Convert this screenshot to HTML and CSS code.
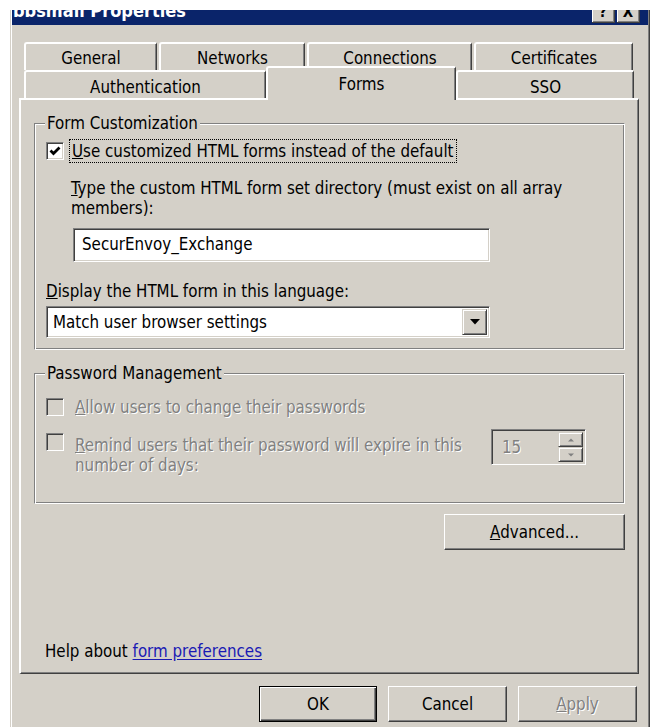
FILE: index.html
```html
<!DOCTYPE html>
<html lang="en">
<head>
<meta charset="utf-8">
<title>bbsmail Properties</title>
<link rel="stylesheet" href="styles.css">
</head>
<body>
<div class="screen">
  <div class="dialog">
    <div class="titlebar">
      <span class="title">bbsmail Properties</span>
      <div class="caption-btns">
        <span class="cbtn">?</span>
        <span class="cbtn">X</span>
      </div>
    </div>
    <div class="client">
      <div class="tabs">
        <div class="tab-row back">
          <div class="tab w-general">General</div>
          <div class="tab w-networks">Networks</div>
          <div class="tab w-connections">Connections</div>
          <div class="tab w-certificates">Certificates</div>
        </div>
        <div class="tab-row front">
          <div class="tab w-auth">Authentication</div>
          <div class="tab active w-forms">Forms</div>
          <div class="tab w-sso">SSO</div>
        </div>
      </div>

      <div class="pane">
        <fieldset class="group group-forms">
          <legend>Form Customization</legend>
          <div class="check-row">
            <span class="checkbox">
              <svg viewBox="0 0 14 14" width="14" height="14"><path d="M2.5 6.5 L5.5 9.5 L11.5 3.5" fill="none" stroke="#000" stroke-width="2.8"/></svg>
            </span>
            <span class="focus-label"><u>U</u>se customized HTML forms instead of the default</span>
          </div>
          <p class="hint"><u>T</u>ype the custom HTML form set directory (must exist on all array members):</p>
          <div class="textbox">SecurEnvoy_Exchange</div>
          <p class="field-label"><u>D</u>isplay the HTML form in this language:</p>
          <div class="combo">
            <span class="combo-value">Match user browser settings</span>
            <span class="combo-btn">
              <svg viewBox="0 0 10 6" width="10" height="6"><path d="M0 0 H10 L5 5.5 Z" fill="#000"/></svg>
            </span>
          </div>
        </fieldset>

        <fieldset class="group group-password">
          <legend>Password Management</legend>
          <div class="check-row disabled first">
            <span class="checkbox off"></span>
            <span class="check-text"><u>A</u>llow users to change their passwords</span>
          </div>
          <div class="check-row disabled second">
            <span class="checkbox off"></span>
            <span class="check-text wrap"><u>R</u>emind users that their password will expire in this number of days:</span>
            <div class="spin">
              <span class="spin-value">15</span>
              <span class="spin-btns">
                <span class="spin-btn"><svg viewBox="0 0 6 4" width="6" height="4"><path d="M0 3.5 L3 0.5 L6 3.5 Z" fill="#808080"/></svg></span>
                <span class="spin-btn"><svg viewBox="0 0 6 4" width="6" height="4"><path d="M0 0.5 L3 3.5 L6 0.5 Z" fill="#808080"/></svg></span>
              </span>
            </div>
          </div>
        </fieldset>

        <div class="advanced-row">
          <span class="btn advanced"><u>A</u>dvanced...</span>
        </div>

        <p class="help">Help about <a href="#" class="link">form preferences</a></p>
      </div>

      <div class="actions">
        <span class="btn default">OK</span>
        <span class="btn">Cancel</span>
        <span class="btn disabled"><u>A</u>pply</span>
      </div>
    </div>
  </div>
</div>
</body>
</html>
```

FILE: styles.css
```css
* { box-sizing: border-box; }

html, body {
  margin: 0;
  padding: 0;
}

body {
  background: #fff;
  color: #000;
  font-family: "DejaVu Sans Condensed", "DejaVu Sans", sans-serif;
  font-stretch: condensed;
  font-size: 16.8px;
  line-height: 20px;
}

u { text-decoration: underline; text-underline-offset: 1px; }

.screen {
  width: 653px;
  height: 727px;
  overflow: hidden;
  padding: 10px 0 0 10px;
}

/* window frame */
.dialog {
  width: 640px;
  height: 717px;
  background: #d4d0c8;
  border-left: 1px solid #d4d0c8;
  border-right: 1px solid #404040;
  box-shadow: inset 1px 0 0 #fff, inset -1px 0 0 #808080;
  display: flex;
  flex-direction: column;
}

.titlebar {
  height: 15px;
  margin: 0 1px;
  background: #0a246a;
  display: flex;
  justify-content: space-between;
  overflow: hidden;
}

.title {
  color: #fff;
  font-weight: bold;
  font-size: 18px;
  line-height: 16px;
  margin-top: -7px;
  padding-left: 1px;
  white-space: nowrap;
}

.caption-btns {
  display: flex;
  gap: 2px;
  padding-right: 8px;
  margin-top: -7px;
}

.cbtn {
  width: 23px;
  height: 20px;
  background: #d4d0c8;
  border-right: 1px solid #404040;
  border-bottom: 1px solid #404040;
  box-shadow: inset 1px 1px 0 #fff, inset -1px -1px 0 #808080;
  font-weight: bold;
  font-family: "DejaVu Sans", sans-serif;
  font-size: 15px;
  line-height: 18px;
  text-align: center;
}

.client {
  flex: 1;
  padding: 17px 0 0 8px;
  display: flex;
  flex-direction: column;
}

/* tab strip */
.tabs {
  padding-left: 5px;
  width: 620px;
}

.tab-row {
  display: flex;
  position: relative;
}

.tab-row.back .tab {
  height: 28px;
  margin-right: 2px;
  padding-top: 1px;
  line-height: 26px;
}

.tab-row.front {
  margin-top: -4px;
  height: 32px;
  align-items: flex-end;
  z-index: 2;
}

.tab {
  flex: none;
  height: 28px;
  background: #d4d0c8;
  border-top: 2px solid #fff;
  border-left: 2px solid #fff;
  border-right: 1px solid #404040;
  box-shadow: inset -1px 0 0 #808080;
  border-top-left-radius: 3px;
  border-top-right-radius: 2px;
  text-align: center;
  white-space: nowrap;
}

.tab-row.front .tab { line-height: 30px; }

.w-general { width: 133px; }
.w-networks { width: 146px; }
.w-connections { width: 165px; }
.w-certificates { width: 159px; }
.w-auth { width: 242px; }
.w-forms { width: 190px; }
.w-sso { width: 178px; }

.tab-row.front .tab.active {
  height: 34px;
  margin-bottom: -2px;
  padding-top: 1px;
  line-height: 30px;
  position: relative;
  z-index: 3;
}

/* page of the property sheet */
.pane {
  width: 620px;
  height: 576px;
  border-top: 2px solid #fff;
  border-left: 2px solid #fff;
  border-right: 1px solid #404040;
  border-bottom: 1px solid #404040;
  box-shadow: inset -1px -1px 0 #808080;
  padding: 14px 13px 12px 13px;
  display: flex;
  flex-direction: column;
  position: relative;
  z-index: 1;
}

.group {
  margin: 0;
  padding: 7px 11px 11px 11px;
  border: 1px solid #808080;
  border-right-color: #fff;
  border-bottom-color: #fff;
  box-shadow: inset 1px 1px 0 #fff, inset -1px -1px 0 #808080;
  min-width: 0;
}

.group legend {
  padding: 0 2px;
  margin-left: -1px;
  line-height: 18px;
  background: #d4d0c8;
}

.group-password {
  margin-top: 14px;
  padding-top: 16px;
  padding-bottom: 28px;
}

p { margin: 0; }

/* check boxes */
.check-row {
  display: flex;
  align-items: flex-start;
}

.checkbox {
  flex: none;
  width: 18px;
  height: 18px;
  background: #fff;
  border: 1px solid;
  border-color: #808080 #fff #fff #808080;
  box-shadow: inset 1px 1px 0 #404040, inset -1px -1px 0 #d4d0c8;
  display: flex;
  align-items: center;
  justify-content: center;
}

.checkbox.off { background: #d4d0c8; }

.group-forms .check-row { height: 24px; }
.group-forms .checkbox { margin-top: 3px; }

.focus-label {
  margin-left: 5px;
  padding: 1px 2px;
  border: 1px dotted #000;
  line-height: 20px;
  white-space: nowrap;
}

.hint {
  margin: 15px 0 0 25px;
  padding-right: 20px;
}

.textbox {
  margin: 10px 0 0 27px;
  width: 417px;
  height: 34px;
  background: #fff;
  border: 1px solid;
  border-color: #808080 #fff #fff #808080;
  box-shadow: inset 1px 1px 0 #404040, inset -1px -1px 0 #d4d0c8;
  padding: 0 8px;
  line-height: 31px;
}

.field-label { margin-top: 19px; }

.combo {
  margin-top: 5px;
  width: 444px;
  height: 32px;
  background: #fff;
  border: 1px solid;
  border-color: #808080 #fff #fff #808080;
  box-shadow: inset 1px 1px 0 #404040, inset -1px -1px 0 #d4d0c8;
  padding: 2px;
  display: flex;
  align-items: stretch;
}

.combo-value {
  flex: 1;
  padding-left: 4px;
  line-height: 27px;
}

.combo-btn {
  width: 25px;
  background: #d4d0c8;
  border: 1px solid;
  border-color: #d4d0c8 #404040 #404040 #d4d0c8;
  box-shadow: inset 1px 1px 0 #fff, inset -1px -1px 0 #808080;
  display: flex;
  align-items: center;
  justify-content: center;
}

/* disabled rows */
.check-row.disabled { color: #808080; }
.check-row.disabled .check-text { text-shadow: 1px 1px 0 #fff; }
.check-row.disabled u { text-decoration-color: #808080; }

.check-text { margin-left: 11px; }
.first .check-text { margin-top: -1px; }

.check-row.second { margin-top: 16px; }
.check-row.second .check-text { margin-top: 2px; width: 400px; flex: none; }

.spin {
  flex: none;
  margin: -4px 0 0 16px;
  width: 95px;
  height: 36px;
  background: #d4d0c8;
  border: 1px solid;
  border-color: #808080 #fff #fff #808080;
  box-shadow: inset 1px 1px 0 #404040, inset -1px -1px 0 #d4d0c8;
  padding: 2px;
  display: flex;
}

.spin-value {
  flex: 1;
  padding-left: 8px;
  line-height: 31px;
  text-shadow: 1px 1px 0 #fff;
}

.spin-btns {
  width: 25px;
  display: flex;
  flex-direction: column;
}

.spin-btn {
  flex: 1;
  background: #d4d0c8;
  border: 1px solid;
  border-color: #d4d0c8 #404040 #404040 #d4d0c8;
  box-shadow: inset 1px 1px 0 #fff, inset -1px -1px 0 #808080;
  display: flex;
  align-items: center;
  justify-content: center;
}

/* push buttons */
.btn {
  display: flex;
  align-items: center;
  justify-content: center;
  height: 36px;
  background: #d4d0c8;
  border: 1px solid;
  border-color: #fff #404040 #404040 #fff;
  box-shadow: inset -1px -1px 0 #808080;
  white-space: nowrap;
}

.advanced-row {
  display: flex;
  justify-content: flex-end;
  margin-top: 10px;
}

.btn.advanced { width: 181px; }

.help {
  margin-top: auto;
  margin-left: 11px;
}

.link {
  color: #1a1ab4;
  text-decoration: underline;
  text-underline-offset: 2px;
}

.actions {
  display: flex;
  justify-content: flex-end;
  gap: 11px;
  width: 620px;
  margin-top: 12px;
  padding-right: 2px;
}

.actions .btn { width: 119px; }

.btn.default {
  width: 118px;
  border-color: #000;
  box-shadow: inset 1px 1px 0 #fff, inset -1px -1px 0 #404040, inset -2px -2px 0 #808080;
}

.btn.disabled {
  color: #808080;
  text-shadow: 1px 1px 0 #fff;
}
```
